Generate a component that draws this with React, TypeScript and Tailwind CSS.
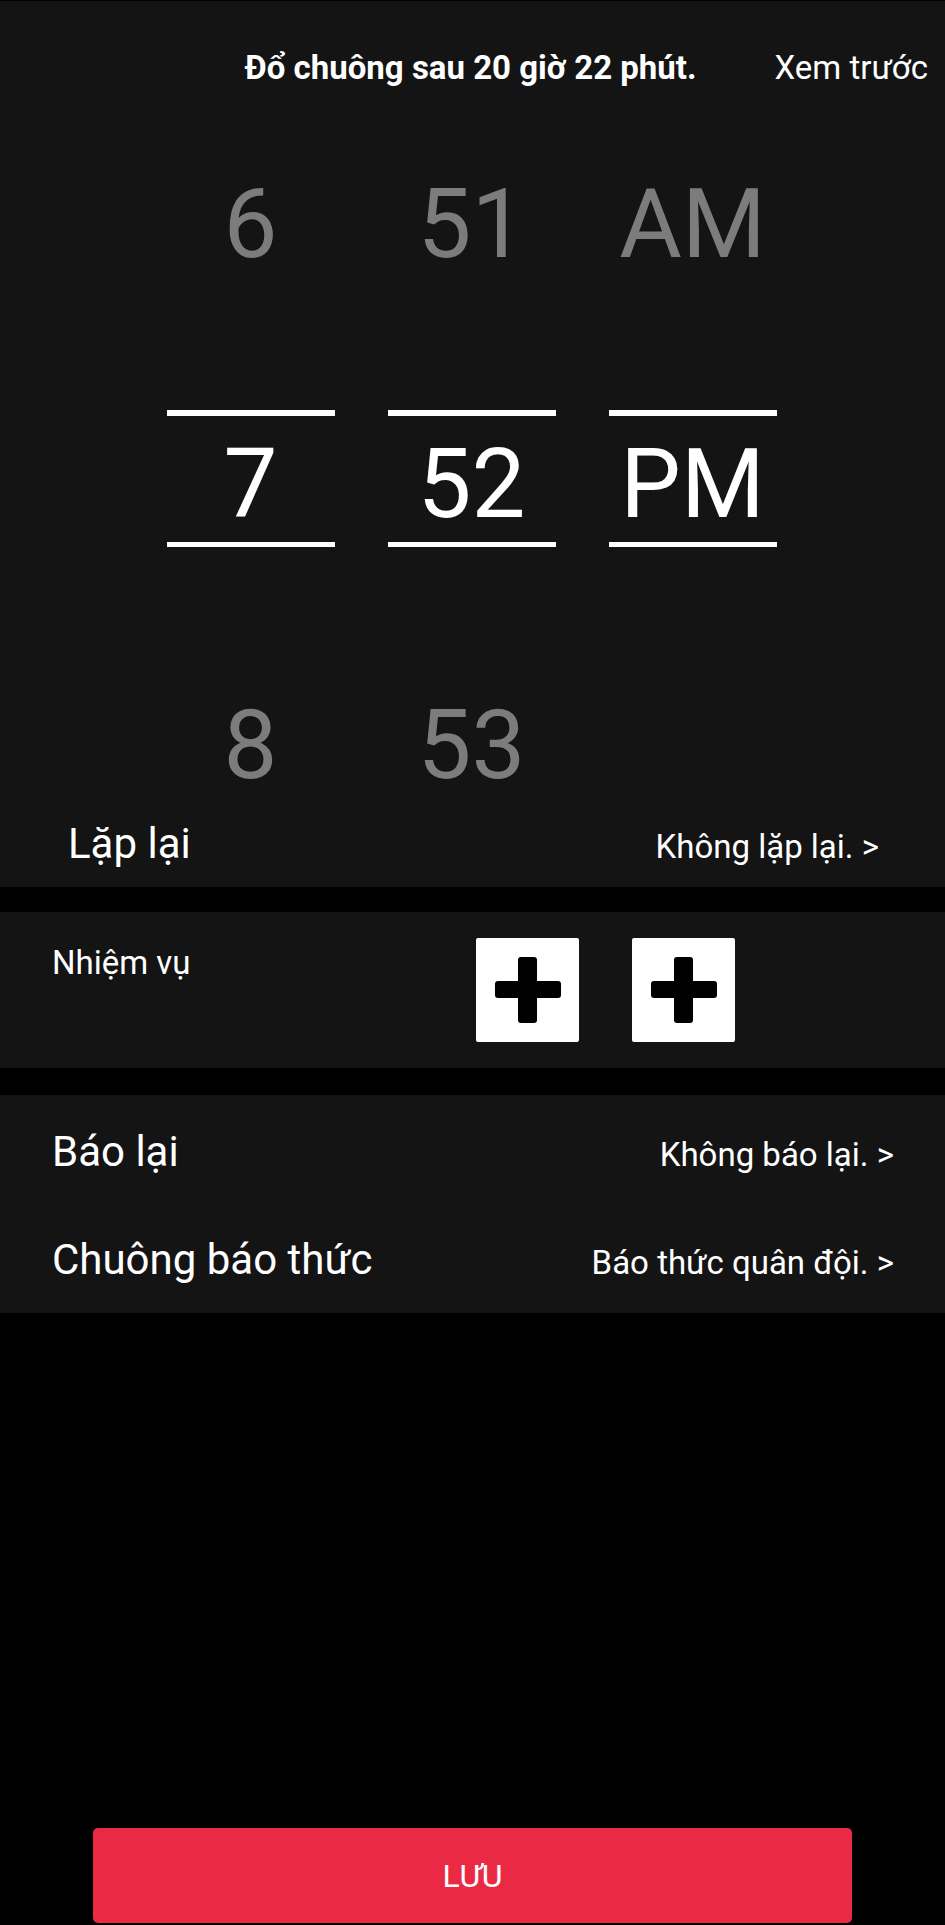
const font = { fontFamily: 'Roboto, "Noto Sans", sans-serif' }

type Col = { top: string; mid: string; bottom: string }

const columns: Col[] = [
  { top: '6', mid: '7', bottom: '8' },
  { top: '51', mid: '52', bottom: '53' },
  { top: 'AM', mid: 'PM', bottom: '' },
]

function PlusBox() {
  return (
    <div className="flex h-[104px] w-[103px] items-center justify-center rounded-[2px] bg-white">
      <svg width="66" height="66" viewBox="0 0 66 66">
        <rect x="23" y="0" width="19" height="66" rx="3" fill="#000" />
        <rect x="0" y="24" width="66" height="17" rx="3" fill="#000" />
      </svg>
    </div>
  )
}

export default function App() {
  return (
    <div className="flex min-h-[1925px] w-full flex-col bg-black text-white" style={font}>
      {/* Picker area */}
      <div className="mt-px bg-[#141414]">
        <div className="flex items-baseline justify-end gap-[78px] pr-[17px] pt-[49px]">
          <span className="text-[33px] font-bold leading-[36px]">Đổ chuông sau 20 giờ 22 phút.</span>
          <span className="text-[33px] leading-[36px]">Xem trước</span>
        </div>

        <div className="mt-[90px] flex justify-center gap-[53px] pr-[2px]">
          {columns.map((c) => (
            <div key={c.mid} className="flex w-[168px] flex-col items-center">
              <div className="h-[96px] text-[96px] leading-[96px] text-[#7c7c7c]">{c.top}</div>
              <div className="mt-[138px] h-[6px] w-full bg-white" />
              <div className="mt-[20px] h-[96px] text-[96px] leading-[96px] text-white">{c.mid}</div>
              <div className="mt-[10px] h-[5px] w-full bg-white" />
              <div className="mt-[150px] h-[96px] text-[96px] leading-[96px] text-[#7c7c7c]">{c.bottom}</div>
            </div>
          ))}
        </div>

        <div className="flex items-baseline justify-between pb-[19px] pl-[68px] pr-[66px] pt-[27px]">
          <span className="text-[42px] leading-[48px]">Lặp lại</span>
          <span className="text-[33px] leading-[40px]">Không lặp lại. &gt;</span>
        </div>
      </div>

      {/* Missions */}
      <div className="mt-[25px] flex h-[156px] bg-[#141414] pl-[52px]">
        <div className="w-[424px] pt-[32px] text-[33px] leading-[38px]">Nhiệm vụ</div>
        <div className="flex gap-[53px] pt-[26px]">
          <PlusBox />
          <PlusBox />
        </div>
      </div>

      {/* Snooze / ringtone */}
      <div className="mt-[27px] flex flex-col gap-[60px] bg-[#141414] pb-[29px] pl-[52px] pr-[51px] pt-[33px]">
        <div className="flex items-baseline justify-between">
          <span className="text-[42px] leading-[48px]">Báo lại</span>
          <span className="text-[33px] leading-[40px]">Không báo lại. &gt;</span>
        </div>
        <div className="flex items-baseline justify-between">
          <span className="text-[42px] leading-[48px]">Chuông báo thức</span>
          <span className="text-[33px] leading-[40px]">Báo thức quân đội. &gt;</span>
        </div>
      </div>

      <div className="mt-auto mb-[2px] px-[93px]">
        <button className="flex h-[95px] w-full items-center justify-center rounded-[5px] bg-[#ea2a44] text-[32px] text-white">
          LƯU
        </button>
      </div>
    </div>
  )
}
